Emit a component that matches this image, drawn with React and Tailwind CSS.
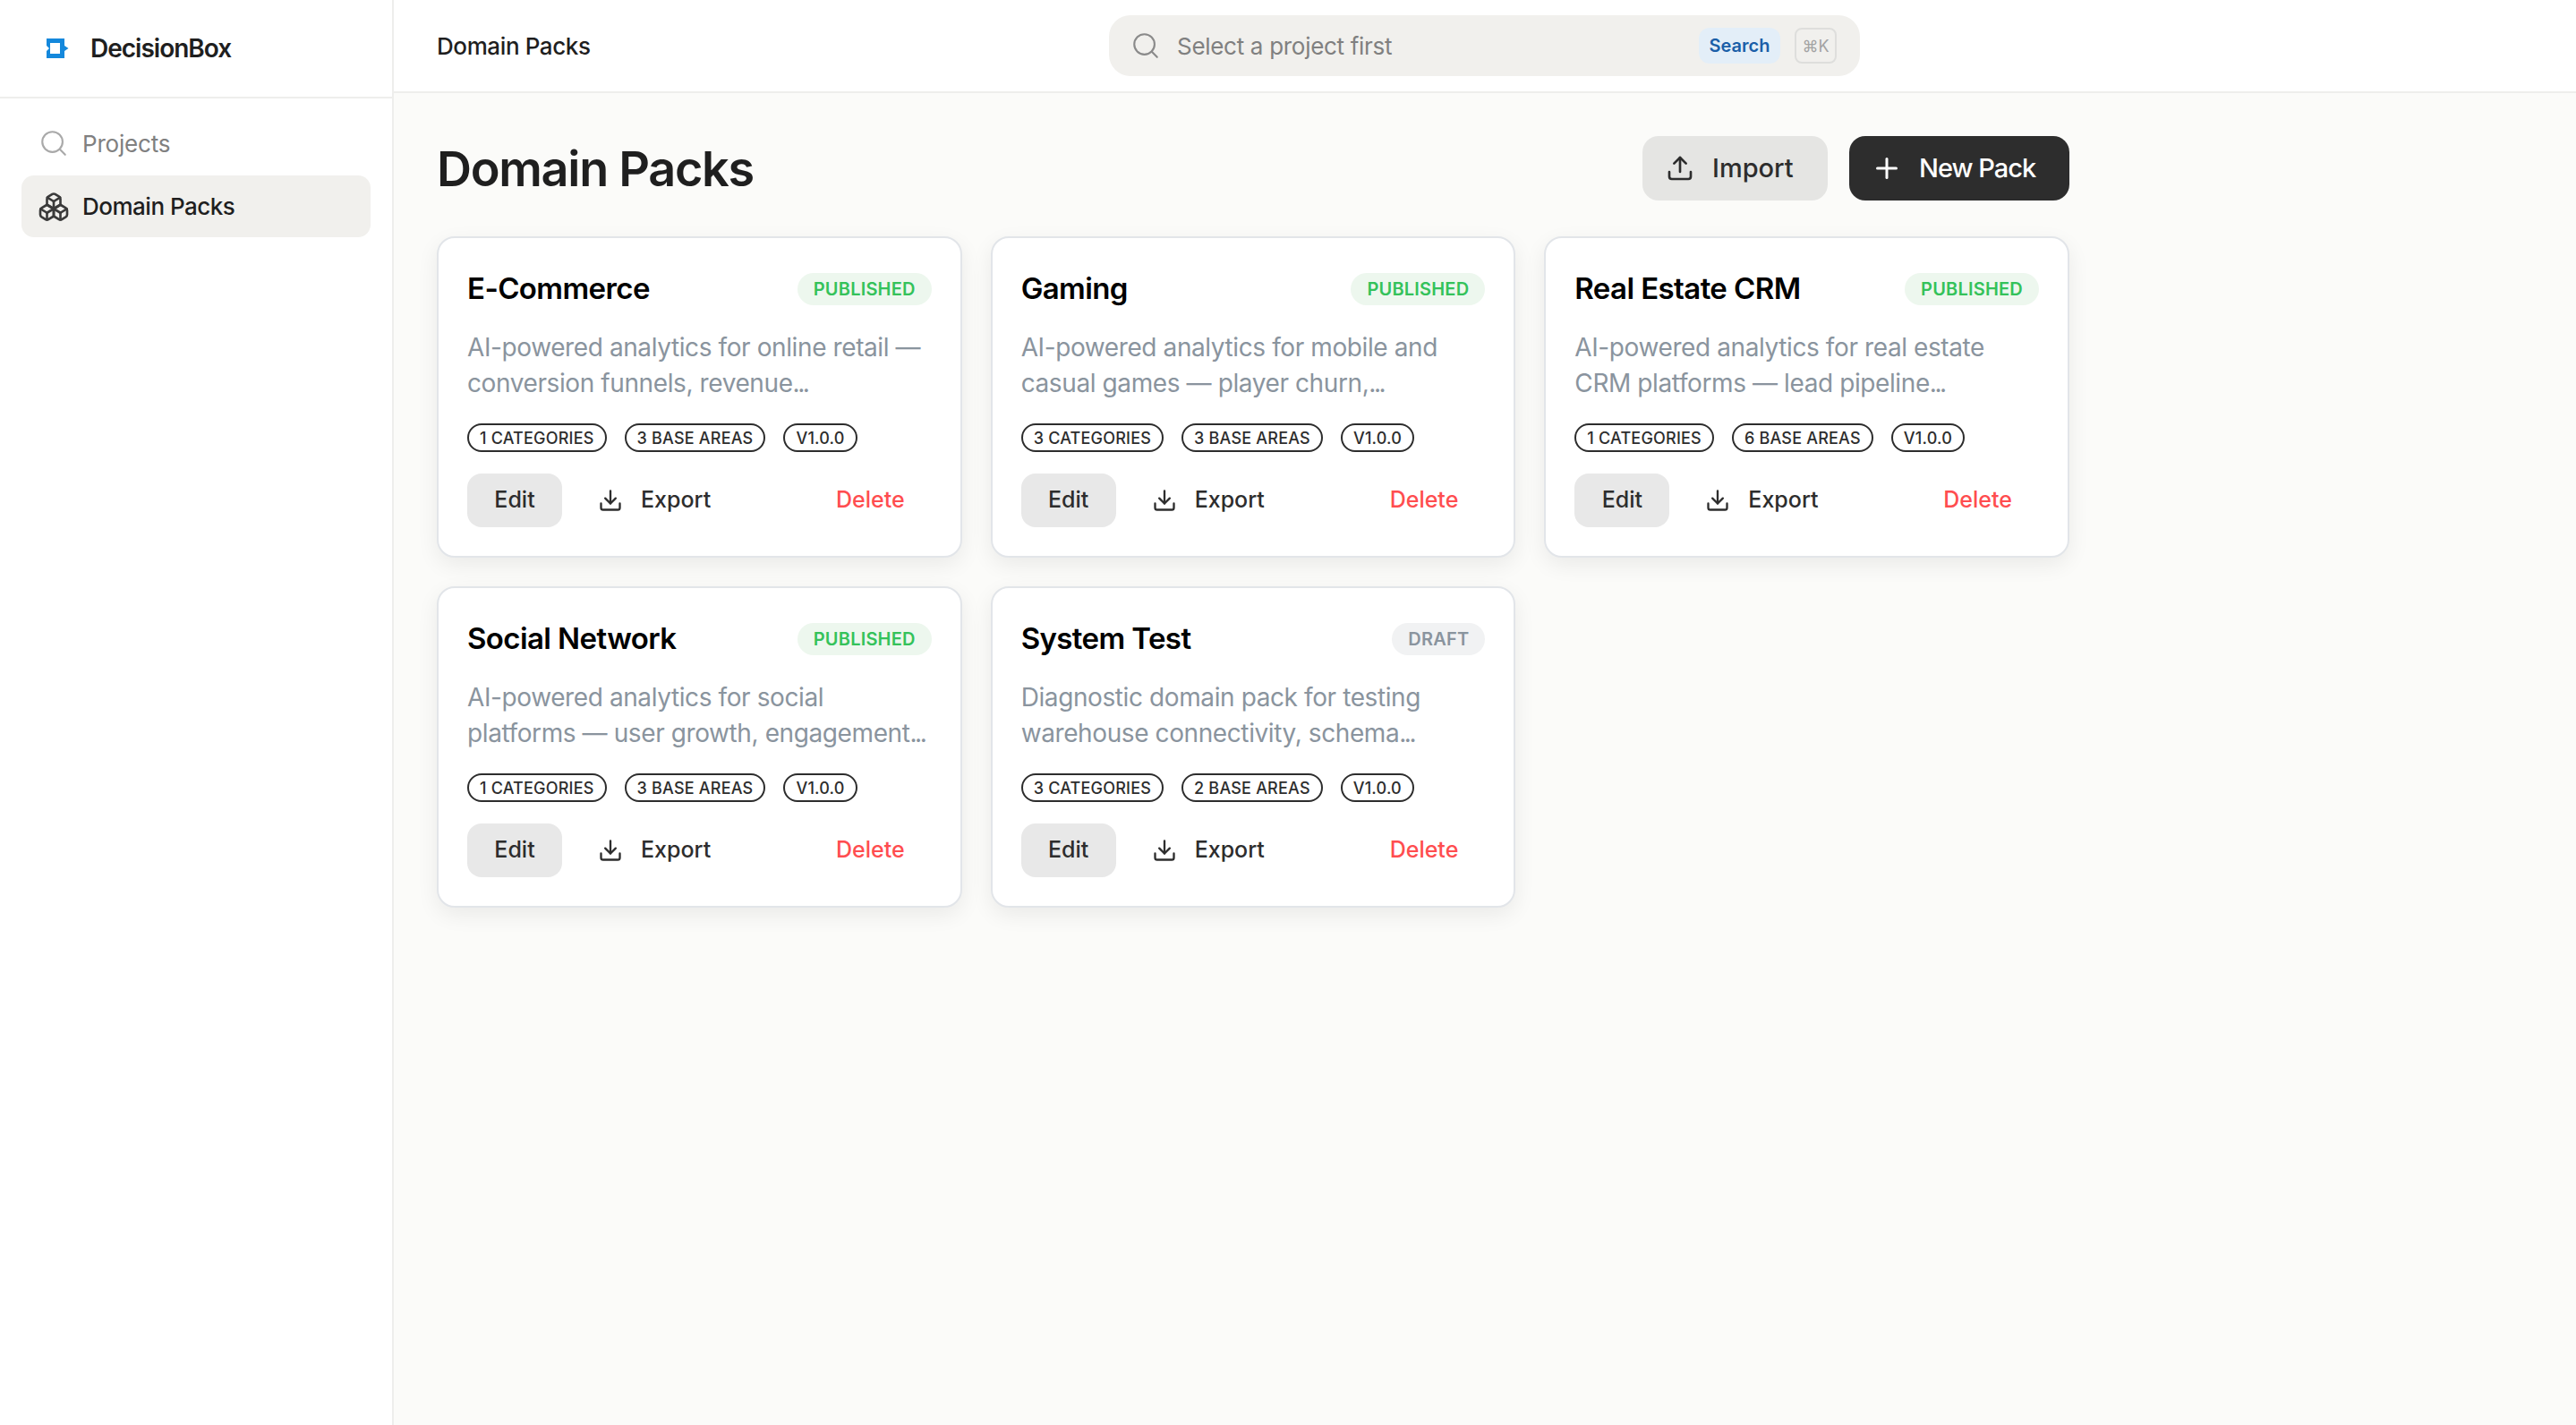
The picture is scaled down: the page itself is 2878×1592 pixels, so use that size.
import { Search, Boxes, Upload, Download, Plus } from "lucide-react";

const packs = [
  { name: "E-Commerce", status: "PUBLISHED", line1: "AI-powered analytics for online retail —", line2: "conversion funnels, revenue", cats: 1, areas: 3 },
  { name: "Gaming", status: "PUBLISHED", line1: "AI-powered analytics for mobile and", line2: "casual games — player churn,", cats: 3, areas: 3 },
  { name: "Real Estate CRM", status: "PUBLISHED", line1: "AI-powered analytics for real estate", line2: "CRM platforms — lead pipeline", cats: 1, areas: 6 },
  { name: "Social Network", status: "PUBLISHED", line1: "AI-powered analytics for social", line2: "platforms — user growth, engagement", cats: 1, areas: 3 },
  { name: "System Test", status: "DRAFT", line1: "Diagnostic domain pack for testing", line2: "warehouse connectivity, schema", cats: 3, areas: 2 },
];

function Logo() {
  return (
    <svg width="26" height="22" viewBox="0 0 26 22" className="shrink-0">
      <path
        fillRule="evenodd"
        fill="#1488dc"
        d="M1 0h20v8l4.500 3-4.500 3v8H1v-8l3-3-3-3V0zM5 5v12h11V5H5z"
      />
    </svg>
  );
}

function Tag({ children }) {
  return (
    <span className="flex h-8 items-center rounded-full border-2 border-[#2d2d2d] px-[12px] text-[18px] font-medium tracking-[0.2px] text-[#2d2d2d]">
      {children}
    </span>
  );
}

function PackCard({ pack }) {
  const published = pack.status === "PUBLISHED";
  return (
    <div className="rounded-[20px] border-2 border-[#e2e5e9] bg-white p-8 shadow-[0_8px_24px_rgba(0,0,0,0.07)]">
      <div className="flex h-[50px] items-center justify-between">
        <h3 className="text-[33px] font-semibold tracking-[-0.6px] text-black">{pack.name}</h3>
        <span
          className={
            published
              ? "flex h-9 items-center rounded-full bg-[#edf7ee] px-[18px] text-[20px] font-semibold tracking-[0.2px] text-[#34c25a]"
              : "flex h-9 items-center rounded-full bg-[#f1f2f3] px-[18px] text-[20px] font-semibold tracking-[0.2px] text-[#8a949e]"
          }
        >
          {pack.status}
        </span>
      </div>
      <p className="mt-5 text-[28px] leading-[40px] tracking-[-0.4px] whitespace-nowrap text-[#8a949e]">
        {pack.line1}
        <br />
        {pack.line2}
        <span className="tracking-[-2.5px]">...</span>
      </p>
      <div className="mt-[25px] flex gap-5">
        <Tag>{pack.cats} CATEGORIES</Tag>
        <Tag>{pack.areas} BASE AREAS</Tag>
        <Tag>V1.0.0</Tag>
      </div>
      <div className="mt-6 flex h-[60px] items-center text-[25px] font-medium text-[#2d2d2d]">
        <button className="flex h-[60px] w-[106px] items-center justify-center rounded-[16px] bg-[#e8e8e8]">Edit</button>
        <button className="ml-10 flex items-center gap-5">
          <Download size={28} strokeWidth={2} />
          Export
        </button>
        <button className="mr-[30px] ml-auto text-[#ff4d4f]">Delete</button>
      </div>
    </div>
  );
}

export default function App() {
  return (
    <div className="flex h-screen bg-[#fbfbf9] font-[Inter,sans-serif] text-[#1f1f1f]">
      {/* Sidebar */}
      <aside className="w-[440px] shrink-0 border-r-2 border-[#eeeeec] bg-white">
        <div className="flex h-[110px] items-center gap-[24px] border-b-2 border-[#eeeeec] pl-[51px]">
          <Logo />
          <span className="text-[28px] font-semibold tracking-[-1px]">DecisionBox</span>
        </div>
        <nav className="flex flex-col px-6 pt-4">
          <a className="mb-[2px] flex h-[68px] items-center gap-[15px] pl-[19px] text-[26px] tracking-[-0.2px] text-[#808080]">
            <Search size={34} strokeWidth={1.5} className="text-[#a9a9a9]" />
            Projects
          </a>
          <a className="flex h-[69px] items-center gap-[14px] rounded-[14px] bg-[#f1f0ed] pl-[18px] text-[26px] font-medium tracking-[-0.5px] text-[#1f1f1f]">
            <Boxes size={36} strokeWidth={1.75} className="text-[#3a3a3a]" />
            Domain Packs
          </a>
        </nav>
      </aside>

      <div className="flex min-w-0 flex-1 flex-col">
        {/* Top bar */}
        <header className="flex h-[104px] shrink-0 items-center border-b-2 border-[#eeeeec] bg-white pl-12">
          <span className="w-[751px] text-[26px] font-medium tracking-[-0.4px]">Domain Packs</span>
          <div className="flex h-[68px] w-[839px] items-center rounded-[24px] bg-[#f1f0ed] pr-[26px] pl-[24px]">
            <Search size={34} strokeWidth={1.5} className="text-[#8a8a8a]" />
            <span className="ml-[18px] text-[26px] tracking-[-0.3px] text-[#808080]">Select a project first</span>
            <span className="ml-auto flex h-10 w-[91px] items-center justify-center rounded-[12px] bg-[#e3eef8] text-[20px] font-semibold text-[#1a5fa8]">
              Search
            </span>
            <span className="ml-4 flex h-10 w-[47px] items-center justify-center rounded-[8px] border-2 border-[#dededc] text-[18px] text-[#a3a3a3]">
              ⌘K
            </span>
          </div>
        </header>

        {/* Page */}
        <main className="flex-1 pt-12 pl-12">
          <div className="w-[1824px]">
            <div className="mb-10 flex h-[72px] items-center justify-between">
              <h1 className="text-[54px] font-semibold tracking-[-1.3px] text-[#1f1f1f]">Domain Packs</h1>
              <div className="flex gap-6">
                <button className="flex h-[72px] w-[207px] items-center gap-5 rounded-[18px] bg-[#e5e5e3] pl-[26px] text-[29px] font-medium text-[#2d2d2d]">
                  <Upload size={32} strokeWidth={2} />
                  Import
                </button>
                <button className="flex h-[72px] w-[246px] items-center gap-[18px] rounded-[18px] bg-[#2d2d2d] pl-6 text-[29px] font-medium tracking-[-1px] text-white">
                  <Plus size={36} strokeWidth={2} />
                  New Pack
                </button>
              </div>
            </div>
            <div className="grid grid-cols-3 gap-8">
              {packs.map((pack) => (
                <PackCard key={pack.name} pack={pack} />
              ))}
            </div>
          </div>
        </main>
      </div>
    </div>
  );
}
